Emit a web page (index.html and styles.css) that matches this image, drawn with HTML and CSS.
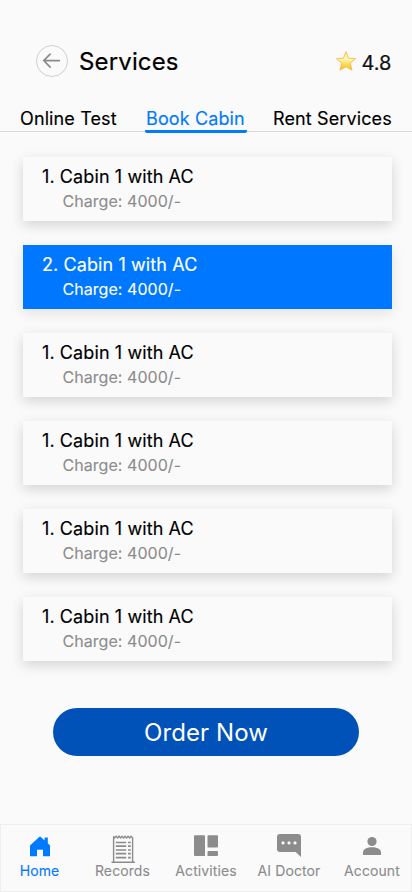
FILE: index.html
```html
<!DOCTYPE html>
<html lang="en">
<head>
<meta charset="utf-8">
<title>Services</title>
<link rel="stylesheet" href="styles.css">
</head>
<body>
<div class="screen">
  <header class="header">
    <button class="back" aria-label="Back">
      <svg width="32" height="32" viewBox="0 0 32 32" fill="none"><circle cx="16" cy="16" r="15.5" stroke="#cfcfcf"/><path d="M24 15.6H8M14.6 8.6L7.8 15.6l6.8 7" stroke="#8c8c8c" stroke-width="1.7"/></svg>
    </button>
    <h1 class="title">Services</h1>
    <div class="rating">
      <svg width="22" height="22" viewBox="0 0 22 22"><defs><linearGradient id="gold" x1="0" y1="0" x2="0" y2="1"><stop offset="0" stop-color="#ffe98a"/><stop offset=".4" stop-color="#fff5b5"/><stop offset=".7" stop-color="#fddb4c"/><stop offset="1" stop-color="#f9b42d"/></linearGradient></defs><path d="M11 1.7l2.6 6.5 7 .5-5.4 4.5 1.8 6.9-6-3.4-6 3.4 1.8-6.9L1.4 8.7l7-.5z" fill="url(#gold)" stroke="#f3b53f" stroke-width=".8" stroke-linejoin="round"/></svg>
      <span class="score">4.8</span>
    </div>
  </header>
  <nav class="tabs">
    <a class="tab tab-test">Online Test</a>
    <a class="tab tab-active">Book Cabin</a>
    <a class="tab tab-rent">Rent Services</a>
  </nav>
  <main class="list">
    <article class="card"><h2 class="name">1. Cabin 1 with AC</h2><p class="charge">Charge: 4000/-</p></article>
    <article class="card selected"><h2 class="name">2. Cabin 1 with AC</h2><p class="charge">Charge: 4000/-</p></article>
    <article class="card"><h2 class="name">1. Cabin 1 with AC</h2><p class="charge">Charge: 4000/-</p></article>
    <article class="card"><h2 class="name">1. Cabin 1 with AC</h2><p class="charge">Charge: 4000/-</p></article>
    <article class="card"><h2 class="name">1. Cabin 1 with AC</h2><p class="charge">Charge: 4000/-</p></article>
    <article class="card"><h2 class="name">1. Cabin 1 with AC</h2><p class="charge">Charge: 4000/-</p></article>
  </main>
  <button class="order">Order Now</button>
  <nav class="bottom">
    <a class="item current">
      <svg width="26" height="32" viewBox="0 0 26 32" fill="currentColor"><path d="M3 25.3V14.6L12.2 6l.8-.6.8.6 3.8 3.4V6.5h3.2v5.8l2.2 2.3v10.7h-7v-6.6h-6v6.6z"/></svg>
      <span>Home</span>
    </a>
    <a class="item">
      <svg width="26" height="32" viewBox="0 0 26 32" fill="none" stroke="currentColor"><path d="M3.6 31.5V6M22.6 31.5V6M1.5 31.2h23.5" stroke-width="1.4"/><path d="M3.5 5l1.2 1.9 1.5-1.7 1.5 1.7 1.4-1.7 1.5 1.7 1.5-1.7 1.5 1.7 1.5-1.7 1.5 1.7 1.5-1.7 1.5 1.7 1.4-1.7 1.5 1.5" stroke-width="1.4"/><path d="M5.8 11.5h10.4M5.8 15.2h10.4M5.8 19h10.4M5.8 22.7h10.4M5.8 26.7h10.4" stroke-width="1.7"/><path d="M18 11.5h2.8M18 15.2h2.8M18 19h2.8M18 22.7h2.8M18 26.7h2.8" stroke-width="1.7"/></svg>
      <span>Records</span>
    </a>
    <a class="item">
      <svg width="26" height="32" viewBox="0 0 26 32" fill="currentColor"><path d="M1 5.2q0-1 1-1h9q1 0 1 1V25H2q-1 0-1-1zM14.5 5.2q0-1 1-1H24q1 0 1 1v10.2q0 1-1 1h-8.5q-1 0-1-1zM15.5 20H24q1 0 1 1v3q0 1-1 1h-9.5v-4q0-1 1-1z"/></svg>
      <span>Activities</span>
    </a>
    <a class="item">
      <svg width="26" height="32" viewBox="0 0 26 32" fill="currentColor"><path fill-rule="evenodd" d="M4 3h18q3 0 3 3v20l-5.3-5H4q-3 0-3-3V6q0-3 3-3zM7 10.3a1.6 1.6 0 100 3.2 1.6 1.6 0 000-3.2zm6 0a1.6 1.6 0 100 3.2 1.6 1.6 0 000-3.2zm6 0a1.6 1.6 0 100 3.2 1.6 1.6 0 000-3.2z"/></svg>
      <span>AI Doctor</span>
    </a>
    <a class="item">
      <svg width="26" height="32" viewBox="0 0 26 32" fill="currentColor"><circle cx="13" cy="10.5" r="4.6"/><path d="M4 21.3c0-3.4 4.3-5.1 9-5.1s9 1.7 9 5.1V24H4z"/></svg>
      <span>Account</span>
    </a>
  </nav>
</div>
</body>
</html>
```
FILE: styles.css
```css
* { box-sizing: border-box; }
body, h1, h2, p { margin: 0; font-weight: 400; }
body { background: #fafafa; color: #000; font-family: Inter, sans-serif; }
button { border: 0; padding: 0; background: none; font-family: inherit; }
svg { display: block; flex: none; }
.screen { width: 412px; height: 892px; display: flex; flex-direction: column; overflow: hidden; }
.header { height: 106px; padding: 45px 20.5px 0 36px; display: flex; align-items: flex-start; }
.title { margin-left: 11px; font-size: 24px; line-height: 33px; letter-spacing: .15px; -webkit-text-stroke: .2px; }
.rating { margin-left: auto; display: flex; align-items: center; gap: 5px; padding-top: 5px; }
.rating svg { margin-top: -4px; }
.score { font-size: 20px; line-height: 26px; color: #111; -webkit-text-stroke: .2px; }
.tabs { height: 27px; padding-left: 20px; display: flex; font-size: 18px; line-height: 25px; letter-spacing: .12px; background: linear-gradient(#d9d9d9, #d9d9d9) 0 25px / 100% 1px no-repeat; white-space: nowrap; }
.tab { -webkit-text-stroke: .15px; }
.tab-test { width: 125px; }
.tab-active { width: 102px; height: 27px; padding-left: 1px; color: #007aff; background: linear-gradient(#007aff, #007aff) 0 24px / 100% 3px no-repeat; border-radius: 0 0 2px 2px; }
.tab-rent { margin-left: 26px; }
.list { margin: 24px 20px 0 23px; display: grid; gap: 24px; }
.card { height: 64px; padding: 8px 0 0 19px; background: #fafafa; box-shadow: 0 4px 12px rgba(0, 0, 0, .16); }
.name { font-size: 18px; line-height: 24px; letter-spacing: .1px; -webkit-text-stroke: .15px; }
.charge { padding-left: 20.5px; font-size: 16px; line-height: 25px; letter-spacing: .05px; color: #8c8c8c; -webkit-text-stroke: .1px; }
.selected { background: #0077ff; box-shadow: 0 4px 12px rgba(0, 0, 0, .1); }
.selected, .selected .charge { color: #fff; }
.order { width: 306px; height: 48px; margin: 47px 0 0 53px; border-radius: 24px; background: #0052b8; color: #fff; font-size: 24px; line-height: 49px; letter-spacing: .1px; }
.bottom { height: 68px; margin-top: auto; border: 1px solid #eee; display: grid; grid-template-columns: 77px 89px 78px 88px 78px; color: #8c8c8c; font-size: 14px; line-height: 18px; letter-spacing: .1px; white-space: nowrap; }
.item { padding-top: 6px; display: flex; flex-direction: column; align-items: center; }
.item span { margin-top: -1px; -webkit-text-stroke: .1px; }
.current { color: #007aff; }
```
